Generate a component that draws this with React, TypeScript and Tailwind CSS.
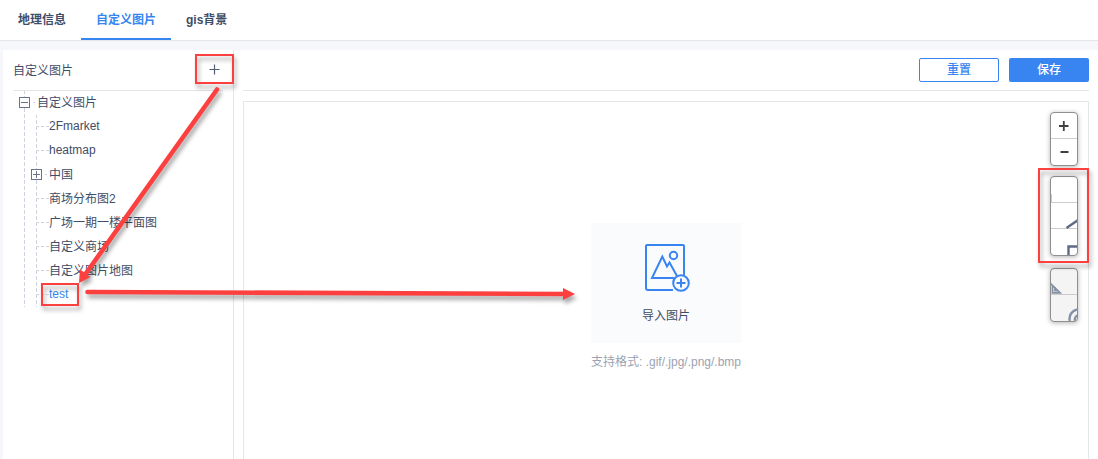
import clsx from "clsx";

const tabs = ["地理信息", "自定义图片", "gis背景"];

const nodes = [
  { label: "2Fmarket", latin: true },
  { label: "heatmap", latin: true },
  { label: "中国", expandable: true },
  { label: "商场分布图2" },
  { label: "广场一期一楼平面图" },
  { label: "自定义商场" },
  { label: "自定义图片地图" },
  { label: "test", latin: true, active: true },
];

function ToggleBox({ open }: { open?: boolean }) {
  return (
    <svg width="11" height="11" viewBox="0 0 11 11" className="shrink-0" fill="none" stroke="#66738a" shapeRendering="crispEdges">
      <rect x="0.5" y="0.5" width="10" height="10" fill="#fff" />
      <path d={open ? "M2 5.5h7" : "M2 5.5h7M5.5 2v7"} />
    </svg>
  );
}

// Dashed guide line of the tree
function Guide({ height, className }: { height: number; className: string }) {
  return (
    <svg width="1" height={height} className={clsx("absolute", className)} shapeRendering="crispEdges">
      <path d={`M0.5 0V${height}`} stroke="#cfd2dc" strokeDasharray="4 2" strokeDashoffset="1" />
    </svg>
  );
}

function Branch({ width, className }: { width: number; className: string }) {
  return (
    <svg width={width} height="1" className={clsx("shrink-0", className)} shapeRendering="crispEdges">
      <path d={`M0 0.5H${width}`} stroke="#cfd2dc" strokeDasharray="3 2" strokeDashoffset="1" />
    </svg>
  );
}

function Tree() {
  return (
    <div className="relative h-[217px]">
      <Guide height={216} className="left-[11px] top-0" />
      <Guide height={192} className="left-[23px] top-6" />
      <div className="relative flex h-6 items-center pl-1.5">
        <span className="flex items-center pb-[2px]">
          <ToggleBox open />
          <Branch width={4} className="ml-[3px]" />
        </span>
        <span>自定义图片</span>
      </div>
      {nodes.map((node) => (
        <div key={node.label} className="relative flex h-6 items-center pl-[18px]">
          <span className="flex items-center pb-[2px]">
            {node.expandable ? (
              <>
                <ToggleBox />
                <Branch width={4} className="ml-[3px]" />
              </>
            ) : (
              <Branch width={12} className="ml-1.5" />
            )}
          </span>
          <span className={clsx(node.latin && "pb-[2px]", node.active && "text-[#3885f2]")}>{node.label}</span>
        </div>
      ))}
    </div>
  );
}

function ImportIcon() {
  return (
    <svg width="46" height="49" viewBox="0 0 46 49" fill="none" stroke="#3885f2" strokeWidth="2" className="ml-1 shrink-0">
      <path d="M28 46H3a2 2 0 0 1-2-2V2a1 1 0 0 1 1-1h36a1 1 0 0 1 1 1V31" />
      <path d="M29 34H7L17.3 12.5L22 22.5L24.5 18.5L32 32" />
      <circle cx="28.5" cy="11.5" r="3.7" />
      <circle cx="36" cy="39" r="7.8" />
      <path d="M36 34.5v9M31.5 39h9" />
    </svg>
  );
}

const group = "flex w-7 flex-col overflow-hidden rounded-[4px] border border-[#8f8f8f] shadow-[0_1px_5px_rgba(0,0,0,0.3)]";

function MapTools() {
  return (
    <div className="absolute right-[10px] top-[10px] flex flex-col gap-[10px]">
      <div className={clsx(group, "h-[54px] bg-white")}>
        <svg width="26" height="52" viewBox="0 0 26 52" fill="none" stroke="#404040" strokeWidth="2">
          <path d="M0 25.5h26" stroke="#ccc" strokeWidth="1" />
          <path d="M8 13h9.5" />
          <path d="M12.8 8v10" strokeWidth="1.8" />
          <path d="M9.5 39h8" />
        </svg>
      </div>
      <div className={clsx(group, "h-20 bg-white")}>
        <svg width="26" height="78" viewBox="0 0 26 78" fill="none" stroke="#5d6b84" strokeWidth="2">
          <path d="M0 25.5h26M0 51.5h26" stroke="#ccc" strokeWidth="1" />
          <path d="M0.5 17v8" stroke="#ccc" strokeWidth="1" />
          <path d="M15.5 51L27 43" strokeWidth="2.4" />
          <path d="M17.5 78V69.5h9" strokeWidth="2.4" />
        </svg>
      </div>
      <div className={clsx(group, "mt-[2px] h-[54px] bg-[#f4f4f4]")}>
        <svg width="26" height="52" viewBox="0 0 26 52" fill="none" stroke="#8490a3" strokeWidth="2">
          <path d="M0 25.5h26" stroke="#ccc" strokeWidth="1" />
          <path d="M-1 14L9 23.8H1.5V16M4 18V21.5H6" strokeWidth="1.8" />
          <path d="M18.8 52A9.5 9.5 0 0 1 27 40.3" strokeWidth="2.4" />
          <path d="M24 52A5 5 0 0 1 27 46" strokeWidth="2.4" />
        </svg>
      </div>
    </div>
  );
}

// Red callout boxes and arrows lying over the page
function Annotations() {
  return (
    <svg
      width="1098"
      height="459"
      className="pointer-events-none absolute left-0 top-0 drop-shadow-[2px_4px_2px_rgba(0,0,0,0.35)]"
      fill="none"
      stroke="#fc4040"
      strokeWidth="2"
    >
      <rect x="196" y="55" width="37" height="28" />
      <rect x="42" y="284" width="36" height="21" />
      <rect x="1039" y="169" width="49" height="93" />
      <g strokeWidth="4.6" strokeLinecap="round">
        <path d="M217 89.5L85.5 274" />
        <path d="M87.5 292L565 294" />
      </g>
      <path d="M79 283L80 269.5L90.5 277Z" fill="#fc4040" stroke="none" />
      <path d="M575 294L563 288V300Z" fill="#fc4040" stroke="none" />
    </svg>
  );
}

export default function App() {
  return (
    <div className="relative flex h-[459px] w-[1098px] flex-col overflow-hidden bg-[#f6f7fa] font-['Liberation_Sans','Noto_Sans_CJK_SC',sans-serif] text-xs text-[#3f4d66]">
      {/* Tabs */}
      <nav className="flex h-[41px] shrink-0 border-b border-[#e5e6ea] bg-white pl-[3px] font-bold">
        {tabs.map((tab, i) => (
          <button
            key={tab}
            className={clsx(
              "h-10 border-b-2 px-[15px] pt-[2px]",
              i === 1 ? "border-[#3885f2] text-[#3885f2]" : "border-transparent"
            )}
          >
            {tab}
          </button>
        ))}
      </nav>

      <div className="ml-[3px] mt-[9px] flex min-h-0 flex-1 bg-white">
        {/* Sidebar */}
        <aside className="w-[231px] shrink-0 border-r border-[#e5e6e8] pl-[10px] pr-[10px]">
          <div className="flex h-[41px] items-center justify-between border-b border-[#e5e6e8] pr-[3px]">
            <span className="pt-[2px]">自定义图片</span>
            <svg width="11" height="11" viewBox="0 0 11 11" stroke="#4f5d75" className="mb-px">
              <path d="M0.5 5.5h10" />
              <path d="M5.5 0.5v10" strokeWidth="1.2" />
            </svg>
          </div>
          <Tree />
        </aside>

        {/* Editor */}
        <main className="flex flex-1 flex-col pl-[9px] pr-[9px]">
          <div className="flex h-[41px] shrink-0 items-start justify-end gap-[10px] border-b border-[#e5e6e8] pt-2">
            <button className="h-6 w-20 rounded-[2px] border border-[#3885f2] font-medium text-[#3885f2]">重置</button>
            <button className="h-6 w-20 rounded-[2px] bg-[#3885f2] font-medium text-white">保存</button>
          </div>
          <div className="relative mt-[10px] flex flex-1 flex-col items-center border border-b-0 border-[#e5e6e8] pt-[121px]">
            <div className="flex h-[120px] w-[150px] flex-col items-center bg-[#fafbfd] pt-[21px]">
              <ImportIcon />
              <span className="mt-[15px]">导入图片</span>
            </div>
            <span className="mt-[11px] text-[#9ba3b0]">支持格式: .gif/.jpg/.png/.bmp</span>
            <MapTools />
          </div>
        </main>
      </div>

      <Annotations />
    </div>
  );
}
